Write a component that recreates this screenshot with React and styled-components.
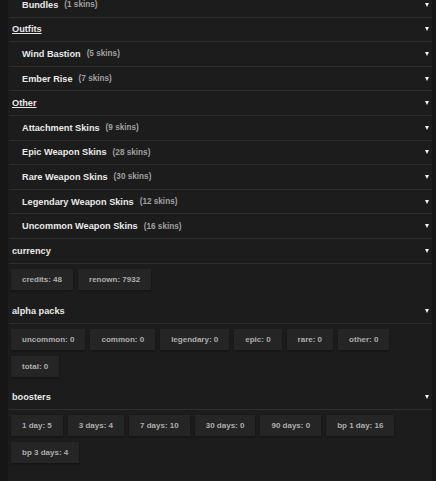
import React from 'react'
import styled, { createGlobalStyle } from 'styled-components'

const GlobalStyle = createGlobalStyle`
	html, body {
		margin: 0;
		padding: 0;
		background: #1c1c1c;
		font-family: "Liberation Sans", Arial, sans-serif;
	}
`;

const Page = styled.div`
	width: 436px;
	height: 481px;
	overflow: hidden;
	display: flex;
	background: #1c1c1c;
`;

const SideStrip = styled.div`
	width: ${props => props.width}px;
	flex-shrink: 0;
	background: #161616;
`;

const Content = styled.div`
	flex: 1;
	margin-top: -7px;
	padding-left: 1px;
`;

const Row = styled.div`
	display: flex;
	align-items: center;
	height: 23.6px;
	border-bottom: 1px solid #2e2e2e;
	padding-left: ${props => props.indent}px;
	padding-right: 3px;
`;

const Title = styled.span`
	color: #e8e8e8;
	font-size: 9.2px;
	font-weight: bold;
	text-decoration: ${props => props.underline ? 'underline' : 'none'};
	text-underline-offset: 1px;
`;

const Count = styled.span`
	color: #a0a0a0;
	font-size: 8.2px;
	font-weight: bold;
	margin-left: 6px;
`;

const Arrow = styled.span`
	margin-left: auto;
	width: 0;
	height: 0;
	border-left: 2.5px solid transparent;
	border-right: 2.5px solid transparent;
	border-top: 4px solid #f2f2f2;
`;

const Section = styled.div`
	padding-bottom: ${props => props.bottom}px;
`;

const ChipList = styled.div`
	display: flex;
	flex-wrap: wrap;
	gap: 6px 5px;
	padding: 5px 0 0 2px;
`;

const Chip = styled.div`
	background: #252525;
	color: #adadad;
	font-size: 8px;
	font-weight: bold;
	height: 21px;
	line-height: 21px;
	padding: 0 11px;
	box-shadow: 0 1px 2px rgba(0, 0, 0, 0.35);
`;

const groups = [
	{ items: [['Bundles', 1]] },
	{ title: 'Outfits', items: [['Wind Bastion', 5], ['Ember Rise', 7]] },
	{
		title: 'Other',
		items: [
			['Attachment Skins', 9],
			['Epic Weapon Skins', 28],
			['Rare Weapon Skins', 30],
			['Legendary Weapon Skins', 12],
			['Uncommon Weapon Skins', 16]
		]
	}
];

const stats = [
	{ title: 'currency', chips: ['credits: 48', 'renown: 7932'], bottom: 10 },
	{
		title: 'alpha packs',
		chips: ['uncommon: 0', 'common: 0', 'legendary: 0', 'epic: 0', 'rare: 0', 'other: 0', 'total: 0'],
		bottom: 8
	},
	{
		title: 'boosters',
		chips: ['1 day: 5', '3 days: 4', '7 days: 10', '30 days: 0', '90 days: 0', 'bp 1 day: 16', 'bp 3 days: 4'],
		bottom: 8
	}
];

export default function App() {
	return (
		<Page>
			<GlobalStyle />
			<SideStrip width={8} />
			<Content>
				{groups.map((group, i) => (
					<div key={i}>
						{group.title && (
							<Row indent={3}>
								<Title underline>{group.title}</Title>
								<Arrow />
							</Row>
						)}
						{group.items.map(([name, n]) => (
							<Row key={name} indent={13}>
								<Title>{name}</Title>
								<Count>({n} skins)</Count>
								<Arrow />
							</Row>
						))}
					</div>
				))}
				{stats.map(s => (
					<Section key={s.title} bottom={s.bottom}>
						<Row indent={3}>
							<Title>{s.title}</Title>
							<Arrow />
						</Row>
						<ChipList>
							{s.chips.map(c => <Chip key={c}>{c}</Chip>)}
						</ChipList>
					</Section>
				))}
			</Content>
			<SideStrip width={4} />
		</Page>
	)
}
